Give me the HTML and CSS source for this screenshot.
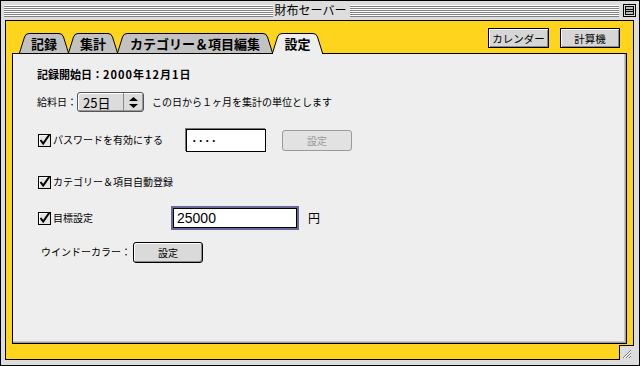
FILE: index.html
```html
<!DOCTYPE html>
<html lang="ja">
<head>
  <meta charset="UTF-8">
  <title>財布セーバー</title>
  <link rel="stylesheet" href="styles.css">
</head>
<body>
  <div class="window">
    <div class="titlebar">
      <div class="stripes"></div>
      <div class="title">財布セーバー</div>
      <div class="stripes"></div>
      <div class="zoombox">
        <svg width="13" height="13" viewBox="0 0 13 13">
          <rect x="0.5" y="0.5" width="12" height="12" fill="#ddd" stroke="#000"/>
          <rect x="2.5" y="2.5" width="8" height="8" fill="#bbb" stroke="#000"/>
          <path d="M3 5.5h7M3 7.5h7" stroke="#000"/>
        </svg>
      </div>
    </div>

    <div class="frame">
      <div class="content">
        <div class="header">
          <div class="tabs">
            <div class="tab tab-record">
              <svg width="50" height="20" viewBox="0 0 50 20"><path d="M0.5 20 L5.5 4 Q6.5 0.5 10 0.5 H40 Q43.5 0.5 44.5 4 L49.5 20" /></svg>
              <span>記録</span>
            </div>
            <div class="tab tab-total">
              <svg width="50" height="20" viewBox="0 0 50 20"><path d="M0.5 20 L5.5 4 Q6.5 0.5 10 0.5 H40 Q43.5 0.5 44.5 4 L49.5 20" /></svg>
              <span>集計</span>
            </div>
            <div class="tab tab-edit">
              <svg width="156" height="20" viewBox="0 0 156 20"><path d="M0.5 20 L5.5 4 Q6.5 0.5 10 0.5 H146 Q149.5 0.5 150.5 4 L155.5 20" /></svg>
              <span>カテゴリー＆項目編集</span>
            </div>
            <div class="tab tab-settings active">
              <svg width="51" height="21" viewBox="0 0 51 21"><path d="M0.5 21 L0.5 20 L5.5 4 Q6.5 0.5 10 0.5 H41 Q44.5 0.5 45.5 4 L50.5 20 L50.5 21" /></svg>
              <span>設定</span>
            </div>
          </div>
          <div class="tools">
            <button class="tool tool-calendar">カレンダー</button>
            <button class="tool tool-calc">計算機</button>
          </div>
        </div>

        <div class="panel">
          <div class="row row-start">
            <span class="label-bold">記録開始日：</span>
            <span class="value-bold">2000年12月1日</span>
          </div>

          <div class="row row-payday">
            <span class="label">給料日：</span>
            <div class="popup">
              <span class="popup-text">25日</span>
              <span class="popup-arrows">
                <svg width="9" height="11" viewBox="0 0 9 11"><path d="M4.5 0 L9 4 H0 Z M4.5 11 L9 7 H0 Z" fill="#000"/></svg>
              </span>
            </div>
            <span class="label note">この日から１ヶ月を集計の単位とします</span>
          </div>

          <div class="row row-password">
            <label class="check check-password">
              <svg width="13" height="13" viewBox="0 0 13 13">
                <rect x="0.5" y="0.5" width="12" height="12" fill="#e4e4e4" stroke="#000"/>
                <path d="M1.5 11.5V1.5H11.5" stroke="#fff" fill="none"/>
                <path d="M2.5 6 L5.2 9.6 L11.5 0.5" stroke="#000" stroke-width="2" fill="none"/>
              </svg>
              <span>パスワードを有効にする</span>
            </label>
            <div class="field field-password">····</div>
            <button class="btn btn-disabled">設定</button>
          </div>

          <div class="row row-auto">
            <label class="check">
              <svg width="13" height="13" viewBox="0 0 13 13">
                <rect x="0.5" y="0.5" width="12" height="12" fill="#e4e4e4" stroke="#000"/>
                <path d="M1.5 11.5V1.5H11.5" stroke="#fff" fill="none"/>
                <path d="M2.5 6 L5.2 9.6 L11.5 0.5" stroke="#000" stroke-width="2" fill="none"/>
              </svg>
              <span>カテゴリー＆項目自動登録</span>
            </label>
          </div>

          <div class="row row-goal">
            <label class="check check-goal">
              <svg width="13" height="13" viewBox="0 0 13 13">
                <rect x="0.5" y="0.5" width="12" height="12" fill="#e4e4e4" stroke="#000"/>
                <path d="M1.5 11.5V1.5H11.5" stroke="#fff" fill="none"/>
                <path d="M2.5 6 L5.2 9.6 L11.5 0.5" stroke="#000" stroke-width="2" fill="none"/>
              </svg>
              <span>目標設定</span>
            </label>
            <div class="field field-goal">25000</div>
            <span class="yen">円</span>
          </div>

          <div class="row row-color">
            <span class="label color-label">ウインドーカラー：</span>
            <button class="btn">設定</button>
          </div>
        </div>
      </div>
    </div>

    <div class="growbox">
      <svg width="14" height="14" viewBox="0 0 14 14">
        <path d="M3 11 L11 3 M6 11 L11 6 M9 11 L11 9" stroke="#777" fill="none"/>
        <path d="M4 11 L11 4 M7 11 L11 7" stroke="#fff" fill="none"/>
      </svg>
    </div>
  </div>
</body>
</html>
```

FILE: styles.css
```css
body {
  margin: 0;
  font-family: "Noto Sans CJK JP", sans-serif;
  line-height: 1;
  color: #000;
}

.window {
  position: relative;
  width: 640px;
  height: 366px;
  box-sizing: border-box;
  border: 1px solid #000;
  background: #dddddd;
  display: flex;
  flex-direction: column;
}

/* title bar */
.titlebar {
  height: 19px;
  display: flex;
  align-items: center;
  padding: 0 3px;
}

.stripes {
  flex: 1;
  height: 12px;
  background: repeating-linear-gradient(to bottom, #fff 0, #fff 1px, #808080 1px, #808080 2px);
}

.title {
  font-size: 12px;
  padding: 0 4px 1px 2px;
}

.zoombox {
  margin-left: 4px;
  display: flex;
}

/* yellow content */
.frame {
  flex: 1;
  display: flex;
  padding: 0 5px 5px 4px;
}

.content {
  flex: 1;
  display: flex;
  flex-direction: column;
  border: 1px solid #000;
  background: #fed51c;
  padding: 0 6px 15px 6px;
}

.header {
  height: 32px;
  display: flex;
}

.tabs {
  display: flex;
  align-items: flex-end;
  margin-left: 7px;
}

.tab {
  position: relative;
  height: 20px;
  display: flex;
  align-items: center;
  justify-content: center;
  font-size: 13px;
  font-weight: bold;
}

.tab + .tab {
  margin-left: -1px;
}

.tab svg {
  position: absolute;
  left: 0;
  top: 0;
}

.tab svg path {
  fill: #c2c2c2;
  stroke: #000;
}

.tab span {
  position: relative;
  padding-top: 1px;
}

.tab-record, .tab-total { width: 50px; }
.tab-edit { width: 156px; }

.tab.active {
  width: 51px;
  height: 21px;
  margin-bottom: -1px;
  z-index: 1;
  align-items: flex-start;
}

.tab.active span {
  padding-top: 4px;
}

.tab.active svg path {
  fill: #eeeeee;
}

.tools {
  margin-left: auto;
  margin-right: 7px;
  margin-top: 7px;
  display: flex;
  gap: 11px;
  align-self: flex-start;
}

.tool {
  height: 20px;
  padding: 0;
  font-family: inherit;
  font-size: 10.5px;
  color: #000;
  background: #d6d6d6;
  border: 1px solid #000;
  box-shadow: inset 1px 1px #fff, inset -1px -1px #8a8a8a;
}

.tool-calendar { width: 61px; }
.tool-calc { width: 60px; }

/* settings panel */
.panel {
  flex: 1;
  background: #eeeeee;
  border: 1px solid #000;
  box-shadow: inset -1px -1px #a0a0a0, inset -2px -2px #c8c8c8;
  padding: 12px 0 0 24px;
}

.row {
  display: flex;
  align-items: center;
}

.row-start { height: 16px; }
.row-payday { height: 22px; margin-top: 9px; }
.row-password { height: 24px; margin-top: 15px; }
.row-auto { height: 16px; margin-top: 22px; }
.row-goal { height: 24px; margin-top: 16px; }
.row-color { height: 22px; margin-top: 11px; }

.label {
  font-size: 10px;
}

.label-bold {
  font-size: 11px;
  font-weight: bold;
  width: 66px;
}

.value-bold {
  font-size: 11px;
  font-weight: bold;
  letter-spacing: 1px;
}

.popup {
  width: 67px;
  height: 20px;
  box-sizing: border-box;
  border: 1px solid #555;
  border-radius: 3px;
  background: #dcdcdc;
  box-shadow: inset 1px 1px #fff, inset -1px -1px #999;
  display: flex;
  align-items: center;
}

.popup-text {
  flex: 1;
  font-size: 13px;
  padding-left: 5px;
}

.popup-arrows {
  width: 19px;
  height: 100%;
  border-left: 1px solid #888;
  display: flex;
  align-items: center;
  justify-content: center;
}

.note {
  margin-left: 8px;
}

.check {
  display: flex;
  align-items: center;
  margin-left: 1px;
  font-size: 10px;
}

.check svg {
  margin-right: 2px;
}

.check-password { width: 148px; }
.check-goal { width: 135px; }

.field {
  box-sizing: border-box;
  background: #fff;
  border: 1px solid #000;
  display: flex;
  align-items: center;
}

.field-password {
  width: 80px;
  height: 23px;
  margin-top: 1px;
  box-shadow: -1px -1px 0 #777;
  padding-left: 4px;
  font-size: 11px;
  font-weight: bold;
  letter-spacing: 0;
}

.field-goal {
  width: 124px;
  height: 20px;
  box-shadow: 0 0 0 2px #67679a;
  padding-left: 3px;
  font-family: "Liberation Sans", sans-serif;
  font-size: 14px;
}

.yen {
  margin-left: 11px;
  font-size: 12px;
}

.btn {
  width: 70px;
  height: 21px;
  padding: 0;
  font-family: inherit;
  font-size: 10px;
  color: #000;
  background: #dadada;
  border: 1px solid #000;
  border-radius: 3px;
  box-shadow: inset 1px 1px #fff, inset -1px -1px #888;
}

.btn-disabled {
  margin-left: 16px;
  color: #999;
  background: #e2e2e2;
  border-color: #9a9a9a;
  box-shadow: none;
}

.color-label {
  margin-left: 4px;
  width: 92px;
}

/* resize corner */
.growbox {
  position: absolute;
  right: 5px;
  bottom: 5px;
  width: 14px;
  height: 14px;
  background: #dddddd;
  border-left: 1px solid #000;
  border-top: 1px solid #000;
}
```
